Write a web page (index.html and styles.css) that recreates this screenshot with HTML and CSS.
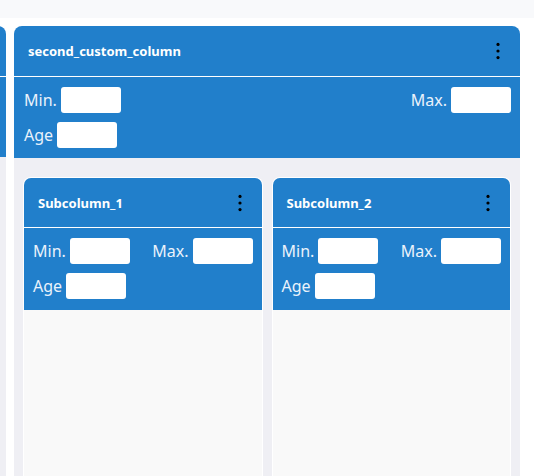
FILE: index.html
```html
<!DOCTYPE html>
<html lang="en">
<head>
  <meta charset="UTF-8">
  <meta name="viewport" content="width=device-width, initial-scale=1">
  <title>Board</title>
  <link rel="stylesheet" href="styles.css">
</head>
<body>
  <div class="topbar"></div>
  <div class="board">
    <div class="track">
      <!-- previous column, scrolled almost out of view -->
      <div class="column">
        <div class="col-head"></div>
        <div class="filters filters-prev"></div>
        <div class="col-body"></div>
      </div>

      <div class="column">
        <div class="col-head">
          <span class="col-title">second_custom_column</span>
          <svg class="kebab" width="6" height="20" viewBox="0 0 6 20"><circle cx="3" cy="3.4" r="1.6"/><circle cx="3" cy="10" r="1.6"/><circle cx="3" cy="16.6" r="1.6"/></svg>
        </div>
        <div class="filters">
          <div class="filter-row">
            <label class="field">Min. <input type="text"></label>
            <label class="field">Max. <input type="text"></label>
          </div>
          <div class="filter-row">
            <label class="field">Age <input type="text"></label>
          </div>
        </div>
        <div class="col-body">
          <div class="subcolumn">
            <div class="col-head sub-head">
              <span class="col-title">Subcolumn_1</span>
              <svg class="kebab" width="6" height="20" viewBox="0 0 6 20"><circle cx="3" cy="3.4" r="1.6"/><circle cx="3" cy="10" r="1.6"/><circle cx="3" cy="16.6" r="1.6"/></svg>
            </div>
            <div class="filters">
              <div class="filter-row">
                <label class="field">Min. <input type="text"></label>
                <label class="field">Max. <input type="text"></label>
              </div>
              <div class="filter-row">
                <label class="field">Age <input type="text"></label>
              </div>
            </div>
            <div class="sub-body"></div>
          </div>
          <div class="subcolumn">
            <div class="col-head sub-head">
              <span class="col-title">Subcolumn_2</span>
              <svg class="kebab" width="6" height="20" viewBox="0 0 6 20"><circle cx="3" cy="3.4" r="1.6"/><circle cx="3" cy="10" r="1.6"/><circle cx="3" cy="16.6" r="1.6"/></svg>
            </div>
            <div class="filters">
              <div class="filter-row">
                <label class="field">Min. <input type="text"></label>
                <label class="field">Max. <input type="text"></label>
              </div>
              <div class="filter-row">
                <label class="field">Age <input type="text"></label>
              </div>
            </div>
            <div class="sub-body"></div>
          </div>
        </div>
      </div>
    </div>
  </div>
</body>
</html>
```

FILE: styles.css
```css
html, body { height: 100%; }
body {
  margin: 0;
  font-family: "Noto Sans", "Open Sans", sans-serif;
  background: #fff;
  display: flex; flex-direction: column;
  overflow: hidden;
}
.topbar { height: 18px; background: #f8f9fb; flex: none; }
.board {
  flex: 1; overflow: hidden;
  padding-top: 8px;
}
.track {
  display: flex; gap: 8px;
  margin-left: -500px;
  height: 100%;
}
.column {
  flex: none; width: 506px;
  display: flex; flex-direction: column;
  border-radius: 8px 8px 0 0;
  overflow: hidden;
}
.col-head {
  background: #217fcb;
  height: 50px; flex: none;
  border-bottom: 1px solid #fff;
  display: flex; align-items: center; justify-content: space-between;
  padding: 0 19px 0 14px;
}
.col-title { color: #fff; font-weight: bold; font-size: 13px; }
.kebab { fill: #000; }
.filters {
  background: #217fcb;
  padding: 10px 9px 10px 10px;
  display: flex; flex-direction: column; gap: 9px;
}
.filters-prev { height: 80px; box-sizing: border-box; }
.filter-row { display: flex; justify-content: space-between; }
.field {
  display: flex; align-items: center; gap: 4px;
  color: #eaf2fb; font-size: 16px;
}
.field input {
  width: 60px; height: 26px; box-sizing: border-box;
  border: none; border-radius: 3px; background: #fff;
  padding: 0 4px;
}
.col-body {
  flex: 1; background: #efeff4;
  display: flex; gap: 9px;
  padding: 19px 9px 0 9px;
}
.subcolumn {
  flex: 1;
  display: flex; flex-direction: column;
  border: 1px solid #fff; border-bottom: none;
  border-radius: 8px 8px 0 0;
  overflow: hidden;
}
.sub-head { height: 49px; padding: 0 19px 0 14px; }
.sub-head + .filters { padding: 10px 9px 11px 9px; }
.sub-body { flex: 1; background: #f9f9f9; }
```
